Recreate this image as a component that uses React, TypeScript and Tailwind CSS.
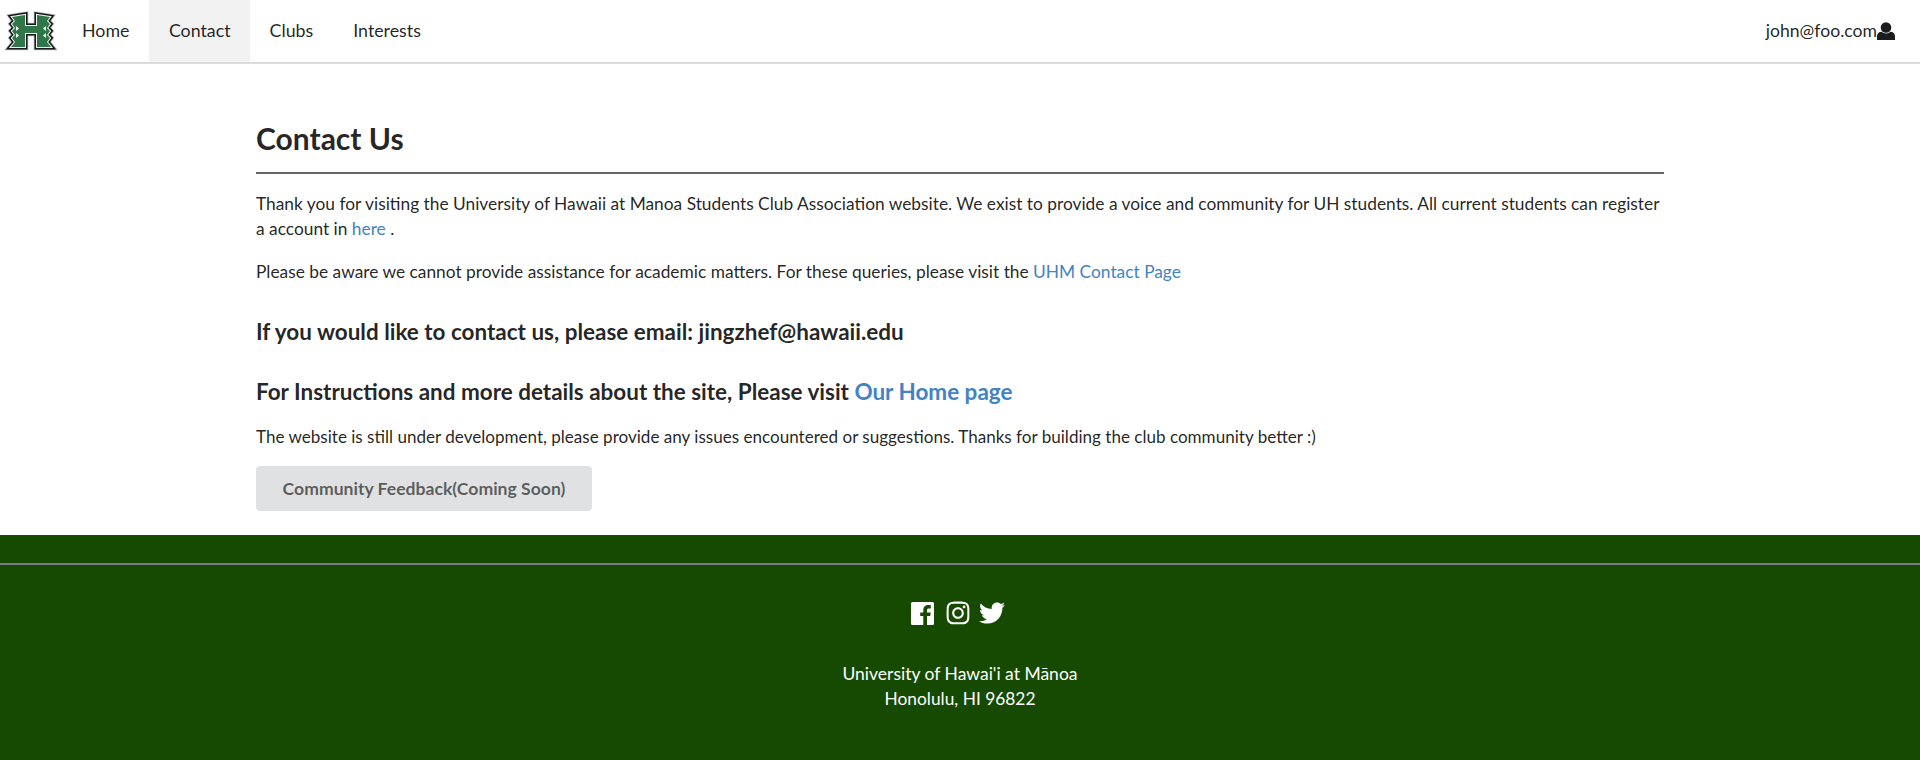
import { FaInstagram, FaTwitter } from "react-icons/fa";

function Logo() {
  const h = "M12 16 L25 14 L25 25 L37 25 L37 14 L50 16 L47 20 L50 23 L47 27 L50 30 L47 34 L50 37 L47 41 L51 46 L37 46 L37 32 L25 32 L25 46 L11 46 L15 41 L12 37 L15 34 L12 30 L15 27 L12 23 L15 20 Z";
  return (
    <svg width="62" height="60" viewBox="0 0 62 60" className="shrink-0">
      <path d={h} fill="#b5b8b6" stroke="#b5b8b6" strokeWidth="6.6" strokeLinejoin="miter" />
      <path d={h} fill="#15191a" stroke="#15191a" strokeWidth="5" strokeLinejoin="miter" />
      <path d={h} fill="#f4f6f4" stroke="#f4f6f4" strokeWidth="2" strokeLinejoin="miter" />
      <path d={h} fill="#2f7748" />
      <g fill="#f4f7f4">
        <path d="M16 25 L19 27.5 L16 30 Z" />
        <path d="M16 32 L19 34.5 L16 37 Z" />
        <path d="M46 25 L43 27.5 L46 30 Z" />
        <path d="M46 32 L43 34.5 L46 37 Z" />
      </g>
    </svg>
  );
}

function UserIcon() {
  return (
    <svg width="18" height="18" viewBox="0 0 18 18" fill="#1b1c1d" className="shrink-0">
      <circle cx="9" cy="5.5" r="5.3" />
      <path d="M0 18 V14.5 C0 11.5 2 9.8 4.5 9.8 C6 11 7.4 11.5 9 11.5 C10.6 11.5 12 11 13.5 9.8 C16 9.8 18 11.5 18 14.5 V18 Z" />
    </svg>
  );
}

function FacebookIcon() {
  return (
    <svg width="23" height="23" viewBox="0 0 23 23" className="shrink-0">
      <path
        fillRule="evenodd"
        fill="#ffffff"
        d="M1.5 0 H21.5 A1.5 1.5 0 0 1 23 1.5 V21.5 A1.5 1.5 0 0 1 21.5 23 H16 V14 H19.2 L19.7 10.4 H16 V8.2 C16 7.1 16.4 6.4 17.9 6.4 H19.8 V3.2 C19.3 3.1 18.3 3 17.1 3 C14.3 3 12.3 4.7 12.3 7.8 V10.4 H9.2 V14 H12.3 V23 H1.5 A1.5 1.5 0 0 1 0 21.5 V1.5 A1.5 1.5 0 0 1 1.5 0 Z"
      />
    </svg>
  );
}

export default function App() {
  const font = "font-['Lato','Open_Sans','Liberation_Sans',sans-serif]";
  return (
    <div className={`${font} text-[17.33px] leading-[25px] text-[rgba(0,0,0,0.87)] bg-white min-h-[760px] flex flex-col`}>
      <nav className="h-[64px] border-b-2 border-[#dcdcdc] flex items-stretch text-[17.8px] shrink-0 bg-white">
        <div className="flex items-center"><Logo /></div>
        <a className="flex items-center px-5 pb-[2px]">Home</a>
        <a className="flex items-center pl-[19.5px] pr-[19px] pb-[2px] bg-[#f2f2f2]">Contact</a>
        <a className="flex items-center px-5 pb-[2px]">Clubs</a>
        <a className="flex items-center px-5 pb-[2px]">Interests</a>
        <div className="ml-auto flex items-center pr-[25px] text-[17.6px]">
          <span className="pb-[2px]">john@foo.com</span>
          <UserIcon />
        </div>
      </nav>

      <main className="w-[1408px] mx-auto pt-[56px] h-[471px] shrink-0">
        <h1 className="text-[30px] leading-[36px] font-bold pb-[16px] border-b-2 border-[#666] mb-[17px]">Contact Us</h1>
        <p>
          Thank you for visiting the University of Hawaii at Manoa Students Club Association website. We exist to provide a voice and community for UH students. All current students can register a account in <a className="text-[#4183c4]">here</a> .
        </p>
        <p className="mt-[18px]">
          Please be aware we cannot provide assistance for academic matters. For these queries, please visit the <a className="text-[#4183c4]">UHM Contact Page</a>
        </p>
        <h3 className="text-[22.47px] leading-[30px] font-bold mt-[33px]">If you would like to contact us, please email: jingzhef@hawaii.edu</h3>
        <h3 className="text-[22.47px] leading-[30px] font-bold mt-[30px]">For Instructions and more details about the site, Please visit <a className="text-[#4183c4]">Our Home page</a></h3>
        <p className="mt-[17px] text-[17.07px]">
          The website is still under development, please provide any issues encountered or suggestions. Thanks for building the club community better :)
        </p>
        <button className="block mt-[17px] w-[336px] h-[45px] rounded-[4px] bg-[#e0e1e2] text-[rgba(0,0,0,0.6)] text-[17.6px] font-bold">Community Feedback(Coming Soon)</button>
      </main>

      <footer className="bg-[#164a00] text-white flex-1 text-center">
        <div className="pt-[28px]"><div className="h-[2px] bg-[#7a7a88]" /></div>
        <div className="flex justify-center items-center mt-[34px] pr-[5px] text-[26px] h-[28px]">
          <FacebookIcon />
          <FaInstagram className="ml-[11px]" />
          <FaTwitter className="ml-[8px]" />
        </div>
        <div className="mt-[34px] text-[17.5px]">University of Hawai'i at Mānoa</div>
        <div>Honolulu, HI 96822</div>
      </footer>
    </div>
  );
}
